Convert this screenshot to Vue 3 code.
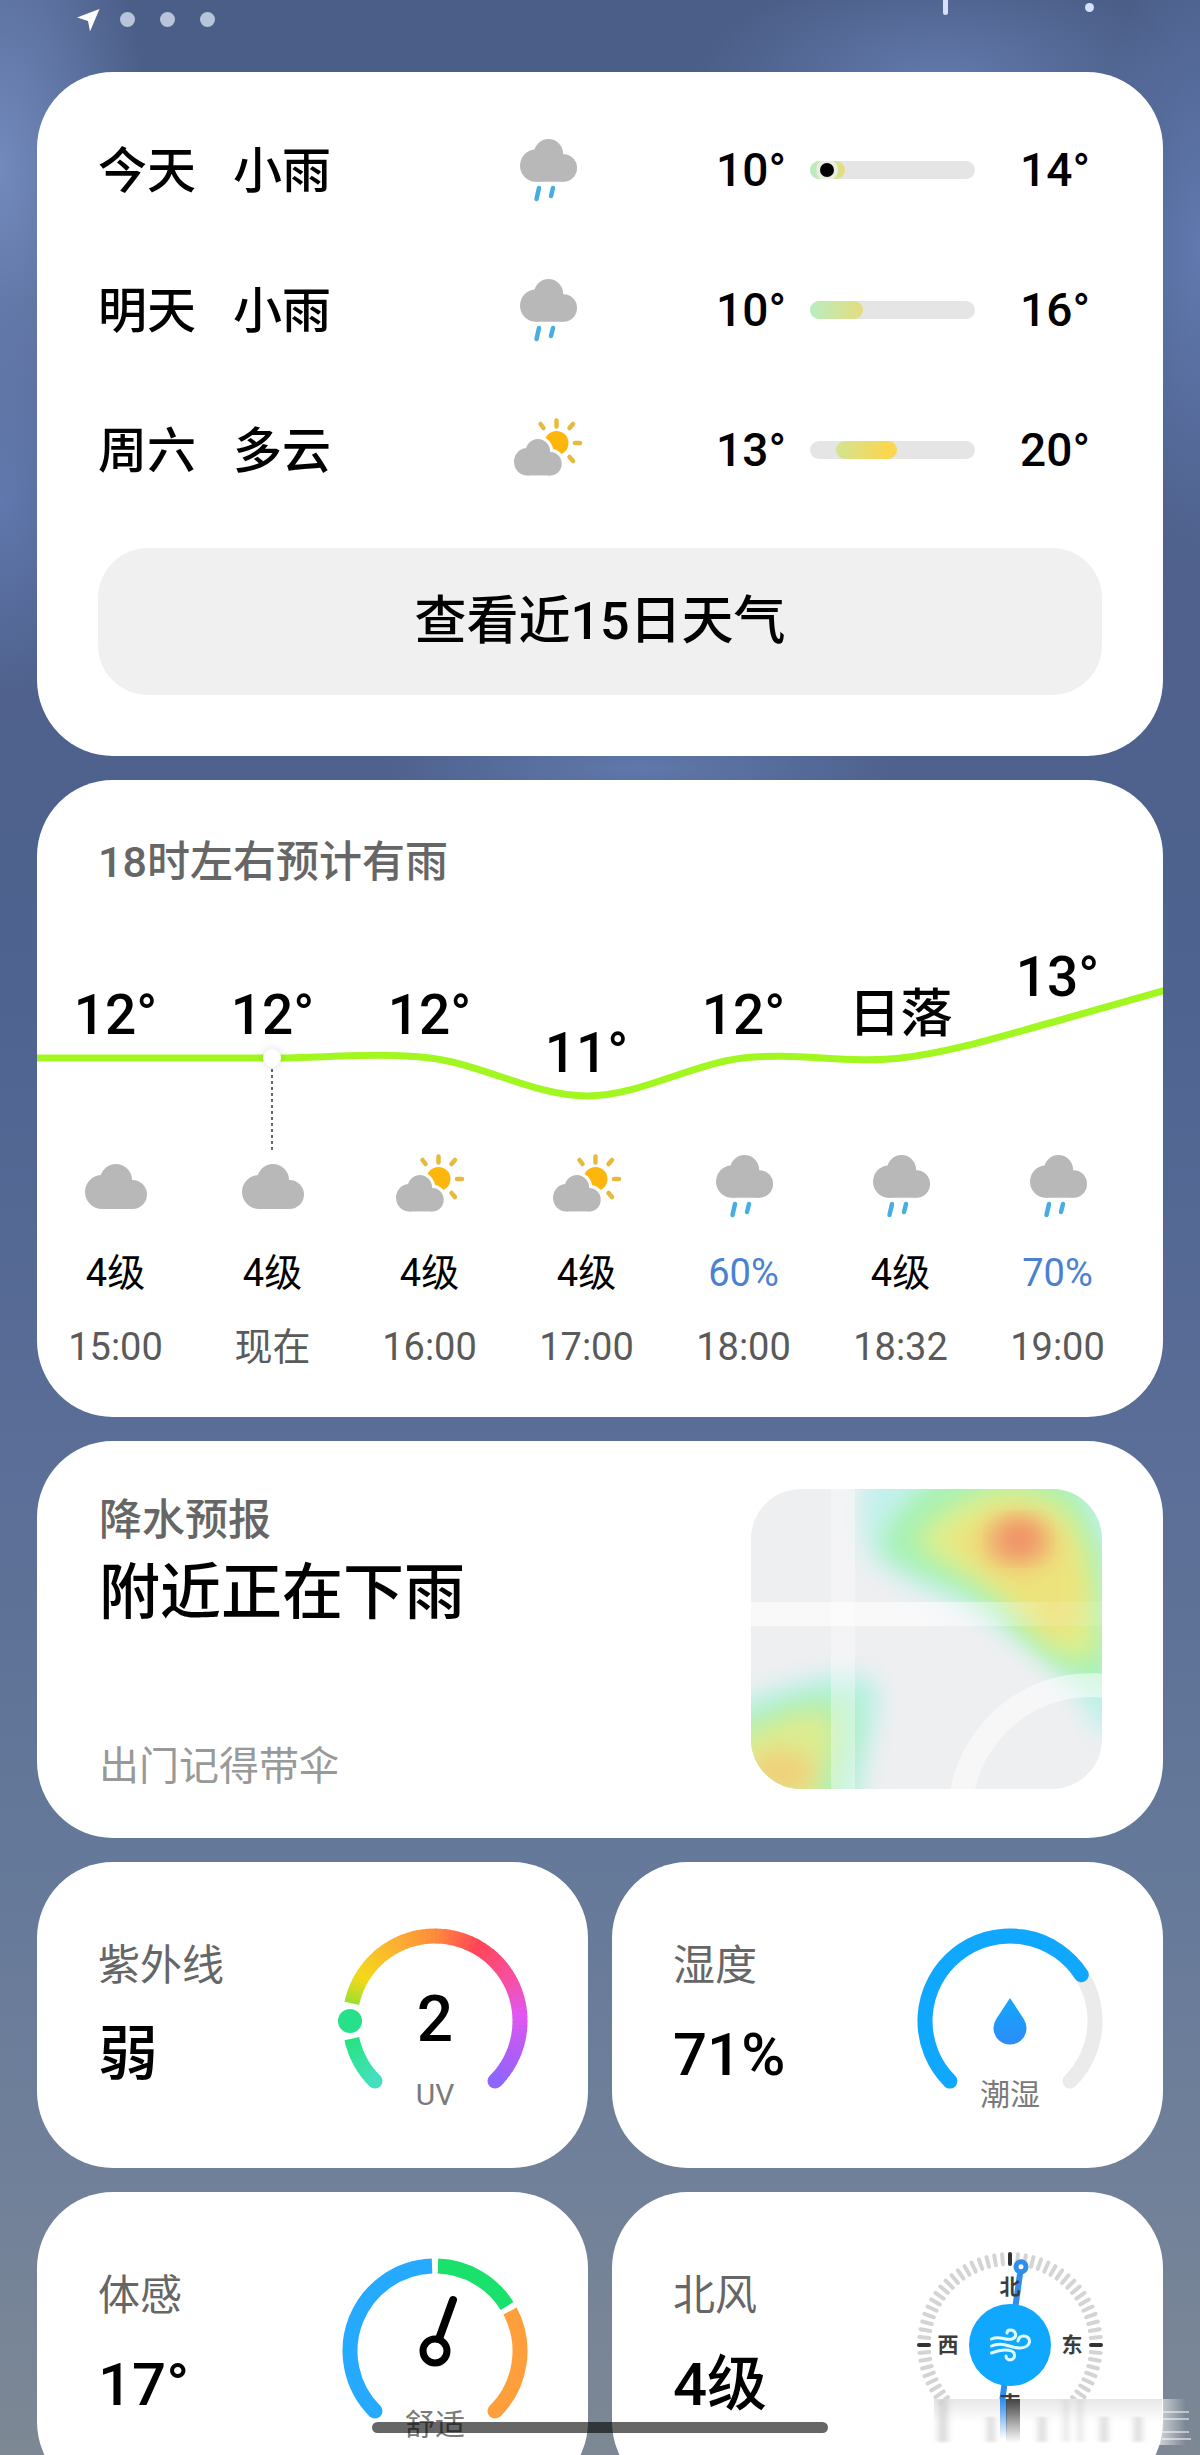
<template>
    <div class="page">
        <header class="status">
            <svg class="locate" viewBox="0 0 23 23" aria-hidden="true">
                <path d="M0 8.5 22.5 0 13 22.5 11 12z" fill="#fff" />
            </svg>
            <i v-for="n in 3" :key="n" class="status-dot"></i>
            <i class="status-bar"></i>
            <i class="status-speck"></i>
        </header>

        <main class="cards">
            <section class="card daily">
                <ul class="days">
                    <li v-for="day in days" :key="day.name" class="day">
                        <div class="day-text">
                            <span>{{ day.name }}</span>
                            <span>{{ day.text }}</span>
                        </div>
                        <svg class="icon" viewBox="0 0 72 72" aria-hidden="true">
                            <use :href="'#' + day.icon" />
                        </svg>
                        <div class="range">
                            <span class="low">{{ day.low }}°</span>
                            <div class="track">
                                <div class="fill" :class="day.tone" :style="{ left: day.from + '%', width: day.span + '%' }"></div>
                                <div v-if="day.now" class="now" :style="{ left: day.now + '%' }"></div>
                            </div>
                            <span class="high">{{ day.high }}°</span>
                        </div>
                    </li>
                </ul>
                <button type="button" class="more">查看近15日天气</button>
            </section>

            <section class="card hourly">
                <h2 class="label">18时左右预计有雨</h2>
                <div class="chart">
                    <svg class="curve" viewBox="0 0 1126 261" aria-hidden="true">
                        <path
                            d="M-5 169H235C288 169 341 163 393 169S498 207 550 207S654 175 706 169S812 175 864 169S968 146 1020 132L1136 99"
                            fill="none"
                            stroke="#a1f71f"
                            stroke-width="7"
                        />
                        <path d="M235 180V261" stroke="#666" stroke-width="2" stroke-dasharray="3 3" />
                        <circle class="marker" cx="235" cy="169" r="9" fill="#fff" />
                    </svg>
                    <ul class="hours">
                        <li v-for="hour in hours" :key="hour.time" class="hour">
                            <div class="plot">
                                <div class="temp" :class="{ event: hour.event }" :style="{ marginTop: 94 + (12 - hour.temp) * 38 + 'px' }">
                                    {{ hour.event || hour.temp + '°' }}
                                </div>
                            </div>
                            <svg class="icon" viewBox="0 0 72 72" aria-hidden="true">
                                <use :href="'#' + hour.icon" />
                            </svg>
                            <div class="wind" :class="{ rain: hour.rain }">{{ hour.rain || '4级' }}</div>
                            <div class="time">{{ hour.time }}</div>
                        </li>
                    </ul>
                </div>
            </section>

            <section class="card rainfall">
                <div class="rain-text">
                    <h2 class="label">降水预报</h2>
                    <p class="headline">附近正在下雨</p>
                    <p class="hint">出门记得带伞</p>
                </div>
                <svg class="map" viewBox="0 0 351 300" aria-hidden="true">
                    <defs>
                        <filter id="soft" x="-30%" y="-30%" width="160%" height="160%">
                            <feGaussianBlur stdDeviation="11" />
                        </filter>
                        <linearGradient id="road">
                            <stop offset="0.5" stop-color="#fff" stop-opacity="0.6" />
                            <stop offset="0.85" stop-color="#fff" stop-opacity="0.12" />
                        </linearGradient>
                    </defs>
                    <rect width="351" height="300" fill="#eeeff1" />
                    <g filter="url(#soft)">
                        <path d="M122-40C104 0 106 56 122 72C158 104 214 112 256 146C296 176 322 196 344 240L400 260V-40z" fill="#c3f1ec" />
                        <path d="M190-20C150 14 122 44 134 66C155 88 212 98 246 128C290 168 316 192 360 206L352 60L320-20z" fill="#a9f1b2" />
                    </g>
                    <g filter="url(#soft)">
                        <path d="M240 0C190 20 160 42 172 60C200 84 240 98 266 130C292 158 316 180 344 166C352 120 344 60 322 24C300 0 262-4 240 0" fill="#dcef8e" />
                        <path d="M250 18C215 30 192 45 200 58C225 80 250 96 275 128C298 150 318 152 328 138C335 100 330 60 310 35C295 18 270 12 250 18" fill="#ede37c" />
                        <ellipse cx="267" cy="53" rx="38" ry="29" fill="#f0bd74" />
                    </g>
                    <ellipse cx="268" cy="50" rx="22" ry="18" fill="#f08f66" filter="url(#soft)" />
                    <g filter="url(#soft)">
                        <path d="M-30 218C30 196 84 178 116 188C140 200 120 240 104 330H-30z" fill="#b8f0e4" />
                        <path d="M-30 236C20 216 70 198 98 206C114 218 104 262 86 330H-30z" fill="#aef0b8" />
                    </g>
                    <g filter="url(#soft)">
                        <path d="M-30 254C20 236 48 216 74 224C92 238 80 270 60 330H-30z" fill="#dcec90" />
                        <ellipse cx="30" cy="284" rx="34" ry="24" fill="#efd27a" />
                    </g>
                    <path d="M80 0h24v300h-24z" fill="#fff" opacity="0.35" />
                    <path d="M0 113h351v24h-351z" fill="url(#road)" />
                    <circle cx="340" cy="327" r="131" fill="none" stroke="#fff" stroke-width="24" opacity="0.5" />
                </svg>
            </section>

            <div class="tiles">
                <section class="card tile">
                    <div>
                        <h2 class="label">紫外线</h2>
                        <p class="value">弱</p>
                    </div>
                    <svg class="gauge" viewBox="-100 -100 200 200">
                        <path v-for="seg in uvArc" :key="seg.d" :d="seg.d" :stroke="seg.color" class="arc" />
                        <circle cx="-60" cy="60" r="7.5" fill="#45dfbf" />
                        <circle cx="60" cy="60" r="7.5" fill="#8e66ff" />
                        <circle cx="-85" cy="0" r="12" fill="#26e08a" />
                        <text class="gauge-number" y="20">2</text>
                        <text class="gauge-text" y="84">UV</text>
                    </svg>
                </section>

                <section class="card tile">
                    <div>
                        <h2 class="label">湿度</h2>
                        <p class="value">71%</p>
                    </div>
                    <svg class="gauge" viewBox="-100 -100 200 200">
                        <defs>
                            <linearGradient id="water" x2="0" y2="1">
                                <stop stop-color="#12a8fc" />
                                <stop offset="1" stop-color="#2d8cf8" />
                            </linearGradient>
                        </defs>
                        <path :d="arc(135, 405)" stroke="#ebebeb" class="arc round" />
                        <path :d="arc(135, 327)" stroke="#10a8ff" class="arc round" />
                        <path d="M0-23 13.75-2A16.5 16.5 0 1 1-13.75-2z" fill="url(#water)" />
                        <text class="gauge-text" y="84">潮湿</text>
                    </svg>
                </section>

                <section class="card tile">
                    <div>
                        <h2 class="label">体感</h2>
                        <p class="value">17°</p>
                    </div>
                    <svg class="gauge" viewBox="-100 -100 200 200">
                        <path :d="arc(135, 268)" stroke="#26aaff" class="arc" />
                        <path :d="arc(272, 328)" stroke="#1ae06c" class="arc" />
                        <path :d="arc(332, 405)" stroke="#ff9f3c" class="arc" />
                        <circle cx="-60" cy="60" r="7.5" fill="#26aaff" />
                        <circle cx="60" cy="60" r="7.5" fill="#ff9f3c" />
                        <circle r="12" fill="none" stroke="#000" stroke-width="7" />
                        <path d="M4-12 18-51" stroke="#000" stroke-width="8" stroke-linecap="round" />
                        <text class="gauge-text" y="84">舒适</text>
                    </svg>
                </section>

                <section class="card tile">
                    <div>
                        <h2 class="label">北风</h2>
                        <p class="value">4级</p>
                    </div>
                    <svg class="gauge" viewBox="-100 -94 200 200">
                        <path
                            v-for="n in 72"
                            :key="n"
                            d="M0-91V-81"
                            :transform="`rotate(${n * 5})`"
                            :stroke="n % 18 ? '#d4d4d4' : '#333'"
                            stroke-width="4"
                            stroke-linecap="round"
                        />
                        <g transform="rotate(8)" fill="none" stroke="#2e8ded">
                            <path d="M0-72V86" stroke-width="6" />
                            <circle cy="-79" r="5" fill="#fff" stroke-width="5" />
                        </g>
                        <circle r="41" fill="#10a8ff" />
                        <g class="compass">
                            <text y="-51">北</text>
                            <text y="66">南</text>
                            <text x="-62" y="7">西</text>
                            <text x="62" y="7">东</text>
                        </g>
                        <g fill="none" stroke="#e2fbff" stroke-width="3" stroke-linecap="round">
                            <path d="M-18.500-6C-10-10-5-4 2-6C8-8 6-15 0-15Q-3-15-3-12" />
                            <path d="M-18.500 1C-8-4 0 3 10 3C22 3 22-9 13.500-9Q9-9 8-4" />
                            <path d="M-18.500 8C-8 4 1 4 4 8C7 16-4 17-4 11" />
                        </g>
                    </svg>
                </section>
            </div>
        </main>

        <svg class="smear" viewBox="0 0 280 46" aria-hidden="true">
            <defs>
                <linearGradient id="haze">
                    <stop stop-color="#fff" stop-opacity="0" />
                    <stop offset="0.1" stop-color="#fff" />
                    <stop offset="0.84" stop-color="#fff" />
                    <stop offset="1" stop-color="#fff" stop-opacity="0" />
                </linearGradient>
                <linearGradient id="edge" x2="0" y2="1">
                    <stop stop-color="#aaa" stop-opacity="0.28" />
                    <stop offset="0.5" stop-color="#aaa" stop-opacity="0" />
                </linearGradient>
                <linearGradient id="needle-fade" x2="0" y2="1">
                    <stop stop-color="#2e8ded" />
                    <stop offset="1" stop-color="#2e8ded" stop-opacity="0" />
                </linearGradient>
                <linearGradient id="ink-fade" x2="0" y2="1">
                    <stop stop-color="#444" />
                    <stop offset="1" stop-color="#444" stop-opacity="0" />
                </linearGradient>
                <filter id="smudge" x="-100%" width="300%">
                    <feGaussianBlur stdDeviation="3 1" />
                </filter>
            </defs>
            <rect width="266" height="46" fill="url(#haze)" />
            <rect x="14" width="228" height="46" fill="url(#edge)" />
            <g fill="#bbb" opacity="0.5" filter="url(#smudge)">
                <path d="M18 0h10v43h-10zM67 18h8v25h-8zM118 18h8v25h-8zM144 0h4v43h-4zM158 0h4v43h-4zM180 18h8v25h-8zM214 18h8v25h-8z" />
            </g>
            <rect x="80" width="7" height="40" fill="url(#needle-fade)" />
            <rect x="86" width="14" height="44" fill="url(#ink-fade)" />
            <path d="M242 13h27M242 20h27M242 33h27M242 40h29" stroke="#fff" stroke-width="2" opacity="0.5" />
        </svg>
        <div class="home-bar"></div>

        <!-- shared weather icons -->
        <svg class="sprite" aria-hidden="true">
            <defs>
                <g id="puff" fill="#b8b8b8">
                    <circle cx="31" cy="16" r="16" />
                    <circle cx="17" cy="28" r="17" />
                    <circle cx="47.500" cy="30.500" r="14.500" />
                    <path d="M17 20h30.500v25h-30.500z" />
                </g>
                <g id="cloud">
                    <use href="#puff" x="5" y="14" />
                </g>
                <g id="rain">
                    <use href="#puff" transform="translate(8 5) scale(0.92 0.95)" />
                    <path d="M27 54 24.500 65M41 54 39 62" stroke="#48aee2" stroke-width="4.500" stroke-linecap="round" />
                </g>
                <g id="partly">
                    <circle cx="44.500" cy="29" r="12" fill="#fdb60b" />
                    <path
                        d="M44.500 6.500v6M63 29h5M57.500 14 61 10M31.500 14 28.500 10M57.500 43 61 47"
                        stroke="#e5ba3d"
                        stroke-width="4.500"
                        stroke-linecap="round"
                    />
                    <use href="#puff" class="halo" transform="translate(2 25) scale(0.77 0.81)" />
                    <use href="#puff" transform="translate(2 25) scale(0.77 0.81)" />
                </g>
            </defs>
        </svg>
    </div>
</template>

<script setup>
const days = [
    { name: '今天', text: '小雨', icon: 'rain', low: 10, high: 14, from: 0, span: 21, tone: 'cool', now: 10.5 },
    { name: '明天', text: '小雨', icon: 'rain', low: 10, high: 16, from: 0, span: 32, tone: 'cool' },
    { name: '周六', text: '多云', icon: 'partly', low: 13, high: 20, from: 16, span: 37, tone: 'warm' }
];

const hours = [
    { time: '15:00', temp: 12, icon: 'cloud' },
    { time: '现在', temp: 12, icon: 'cloud' },
    { time: '16:00', temp: 12, icon: 'partly' },
    { time: '17:00', temp: 11, icon: 'partly' },
    { time: '18:00', temp: 12, icon: 'rain', rain: '60%' },
    { time: '18:32', temp: 12, icon: 'rain', event: '日落' },
    { time: '19:00', temp: 13, icon: 'rain', rain: '70%' }
];

const RADIUS = 85;

function arc(from, to) {
    const point = (deg) => {
        const rad = (deg * Math.PI) / 180;
        return `${(RADIUS * Math.cos(rad)).toFixed(2)} ${(RADIUS * Math.sin(rad)).toFixed(2)}`;
    };
    return `M${point(from)}A${RADIUS} ${RADIUS} 0 ${to - from > 180 ? 1 : 0} 1 ${point(to)}`;
}

// colour stops round the UV dial, by angle
const uvStops = [
    [135, [69, 223, 191]],
    [168, [38, 228, 128]],
    [192, [159, 222, 48]],
    [210, [243, 218, 24]],
    [240, [251, 180, 48]],
    [270, [255, 138, 60]],
    [300, [255, 69, 88]],
    [330, [246, 80, 160]],
    [355, [226, 85, 240]],
    [380, [180, 92, 245]],
    [405, [142, 102, 255]]
];

function uvColor(deg) {
    const i = uvStops.findIndex(([stop]) => stop >= deg);
    const [a, from] = uvStops[Math.max(i - 1, 0)];
    const [b, to] = uvStops[Math.max(i, 1)];
    const t = (deg - a) / (b - a);
    return `rgb(${from.map((c, k) => Math.round(c + (to[k] - c) * t)).join(',')})`;
}

const uvArc = [];
for (let deg = 135; deg < 405; deg += 3) {
    // leave room for the knob
    if (deg >= 168 && deg < 192) continue;
    const end = deg === 165 || deg === 402 ? deg + 3 : deg + 3.5;
    uvArc.push({ d: arc(deg, end), color: uvColor(deg + 1.5) });
}
</script>

<style scoped>
.page {
    position: relative;
    height: 100vh;
    overflow-x: hidden;
    overflow-y: auto;
    scrollbar-width: none;
    color: #000;
    font-family: Roboto, 'Noto Sans CJK SC', sans-serif;
    font-weight: 500;
    background:
        radial-gradient(ellipse 150px 340px at 0 170px, #728abd, transparent),
        radial-gradient(ellipse 240px 110px at 940px 80px, #6279ab, transparent),
        radial-gradient(ellipse 110px 320px at 100% 250px, #6079af, transparent),
        radial-gradient(ellipse 260px 50px at 640px 768px, #6078ab, transparent),
        radial-gradient(ellipse 120px 200px at 0 500px, #6078ae, transparent),
        linear-gradient(#4b5e88 0%, #4f618c 28%, #4e6390 40%, #596d97 58%, #647899 75%, #70809a 88%, #7d8894 100%);
}

h2,
p,
ul {
    margin: 0;
    padding: 0;
    list-style: none;
    font-weight: inherit;
}

.status {
    display: flex;
    height: 72px;
    padding: 0 106px 0 77px;
    box-sizing: border-box;
}

.locate {
    width: 23px;
    height: 23px;
    margin: 9px 20px 0 0;
}

.status-dot {
    width: 15px;
    height: 15px;
    margin: 12px 25px 0 0;
    border-radius: 50%;
    background: #b8c3dc;
}

.status-bar {
    width: 5px;
    height: 15px;
    margin-left: auto;
    border-radius: 0 0 3px 3px;
    background: #d6e0fb;
}

.status-speck {
    width: 9px;
    height: 9px;
    margin: 3px 0 0 137px;
    border-radius: 50%;
    background: #d6e0fb;
}

.cards {
    display: flex;
    flex-direction: column;
    gap: 24px;
    padding: 0 37px 24px;
}

.card {
    border-radius: 76px;
    background: #fff;
}

.label {
    font-size: 43px;
    line-height: 58px;
    color: #666;
}

.icon {
    width: 72px;
    height: 72px;
}

.halo {
    stroke: #fff;
    stroke-width: 8px;
}

.daily {
    padding: 28px 61px 61px;
}

.day {
    display: flex;
    align-items: center;
    height: 140px;
    font-size: 49px;
    line-height: 72px;
}

.day-text {
    display: flex;
    flex: 4;
    gap: 37px;
    padding-top: 3px;
}

.range {
    display: flex;
    flex: 5;
    align-items: center;
    font-size: 46px;
}

.low {
    flex: 1;
    text-align: right;
}

.high {
    width: 115px;
    padding-right: 12px;
    text-align: right;
}

.track {
    position: relative;
    width: 165px;
    height: 18px;
    margin-left: 24px;
    border-radius: 9px;
    background: #e5e5e5;
}

.fill {
    position: absolute;
    top: 0;
    height: 100%;
    border-radius: 9px;
}

.cool {
    background: linear-gradient(90deg, #b9edc3, #e4dd7c);
}

.warm {
    background: linear-gradient(90deg, #d3e492, #fbd650 85%);
}

.now {
    position: absolute;
    top: 2px;
    width: 14px;
    height: 14px;
    margin-left: -7px;
    border-radius: 50%;
    background: #000;
    box-shadow: 0 0 0 4px #e8efe2;
    clip-path: inset(-2px -4px);
}

.more {
    display: block;
    width: 100%;
    height: 147px;
    margin-top: 28px;
    padding: 0;
    border: 0;
    border-radius: 50px;
    background: #f0f0f0;
    color: inherit;
    font: inherit;
    font-size: 52px;
    line-height: 147px;
}

.hourly {
    padding: 53px 0 42px;
    overflow: hidden;
}

.hourly .label {
    padding: 0 61px;
}

.chart {
    position: relative;
    margin-top: -2px;
}

.curve {
    position: absolute;
    top: 0;
    left: 0;
    width: 100%;
}

.marker {
    filter: drop-shadow(0 0 4px rgba(0, 0, 0, 0.15));
}

.hours {
    position: relative;
    display: flex;
    margin-right: 27px;
}

.hour {
    display: flex;
    flex: 1;
    flex-direction: column;
    align-items: center;
    font-size: 38px;
    line-height: 56px;
    white-space: nowrap;
}

.plot {
    height: 261px;
    overflow: hidden;
}

.temp {
    font-size: 55px;
    line-height: 64px;
}

.event {
    font-size: 52px;
}

.wind {
    margin-top: 23px;
    font-weight: 400;
}

.rain {
    color: #4a82d0;
}

.time {
    margin-top: 18px;
    color: #5a5a5a;
    font-weight: 400;
}

.rainfall {
    display: flex;
    justify-content: space-between;
    padding: 48px 61px 43px 62px;
}

.rain-text {
    display: flex;
    flex-direction: column;
    padding-top: 2px;
}

.headline {
    margin-top: 4px;
    font-size: 61px;
    line-height: 80px;
}

.hint {
    margin-top: 106px;
    color: #999;
    font-size: 40px;
    font-weight: 400;
    line-height: 56px;
}

.map {
    width: 351px;
    height: 300px;
    border-radius: 50px;
}

.tiles {
    display: grid;
    grid-template-columns: 1fr 1fr;
    gap: 24px;
}

.tile {
    display: flex;
    justify-content: space-between;
    padding: 59px 53px 47px 61px;
}

.tile .label {
    margin-top: 16px;
    font-size: 42px;
    font-weight: 400;
}

.value {
    margin-top: 20px;
    font-size: 60px;
    line-height: 80px;
}

.gauge {
    width: 200px;
    height: 200px;
}

.arc {
    fill: none;
    stroke-width: 15px;
}

.round {
    stroke-linecap: round;
}

.gauge text {
    text-anchor: middle;
}

.gauge-number {
    font-size: 64px;
}

.gauge-text {
    fill: #7a7a7a;
    font-size: 30px;
    font-weight: 400;
}

.compass {
    fill: #3c3c3c;
    font-size: 21px;
    font-weight: 700;
}

.smear {
    position: fixed;
    right: 0;
    bottom: 10px;
    width: 280px;
    height: 46px;
}

.home-bar {
    position: fixed;
    bottom: 22px;
    left: 31%;
    width: 38%;
    height: 11px;
    border-radius: 6px;
    background: rgba(0, 0, 0, 0.6);
}

.sprite {
    position: absolute;
    width: 0;
    height: 0;
}
</style>

<style>
body {
    margin: 0;
}
</style>
